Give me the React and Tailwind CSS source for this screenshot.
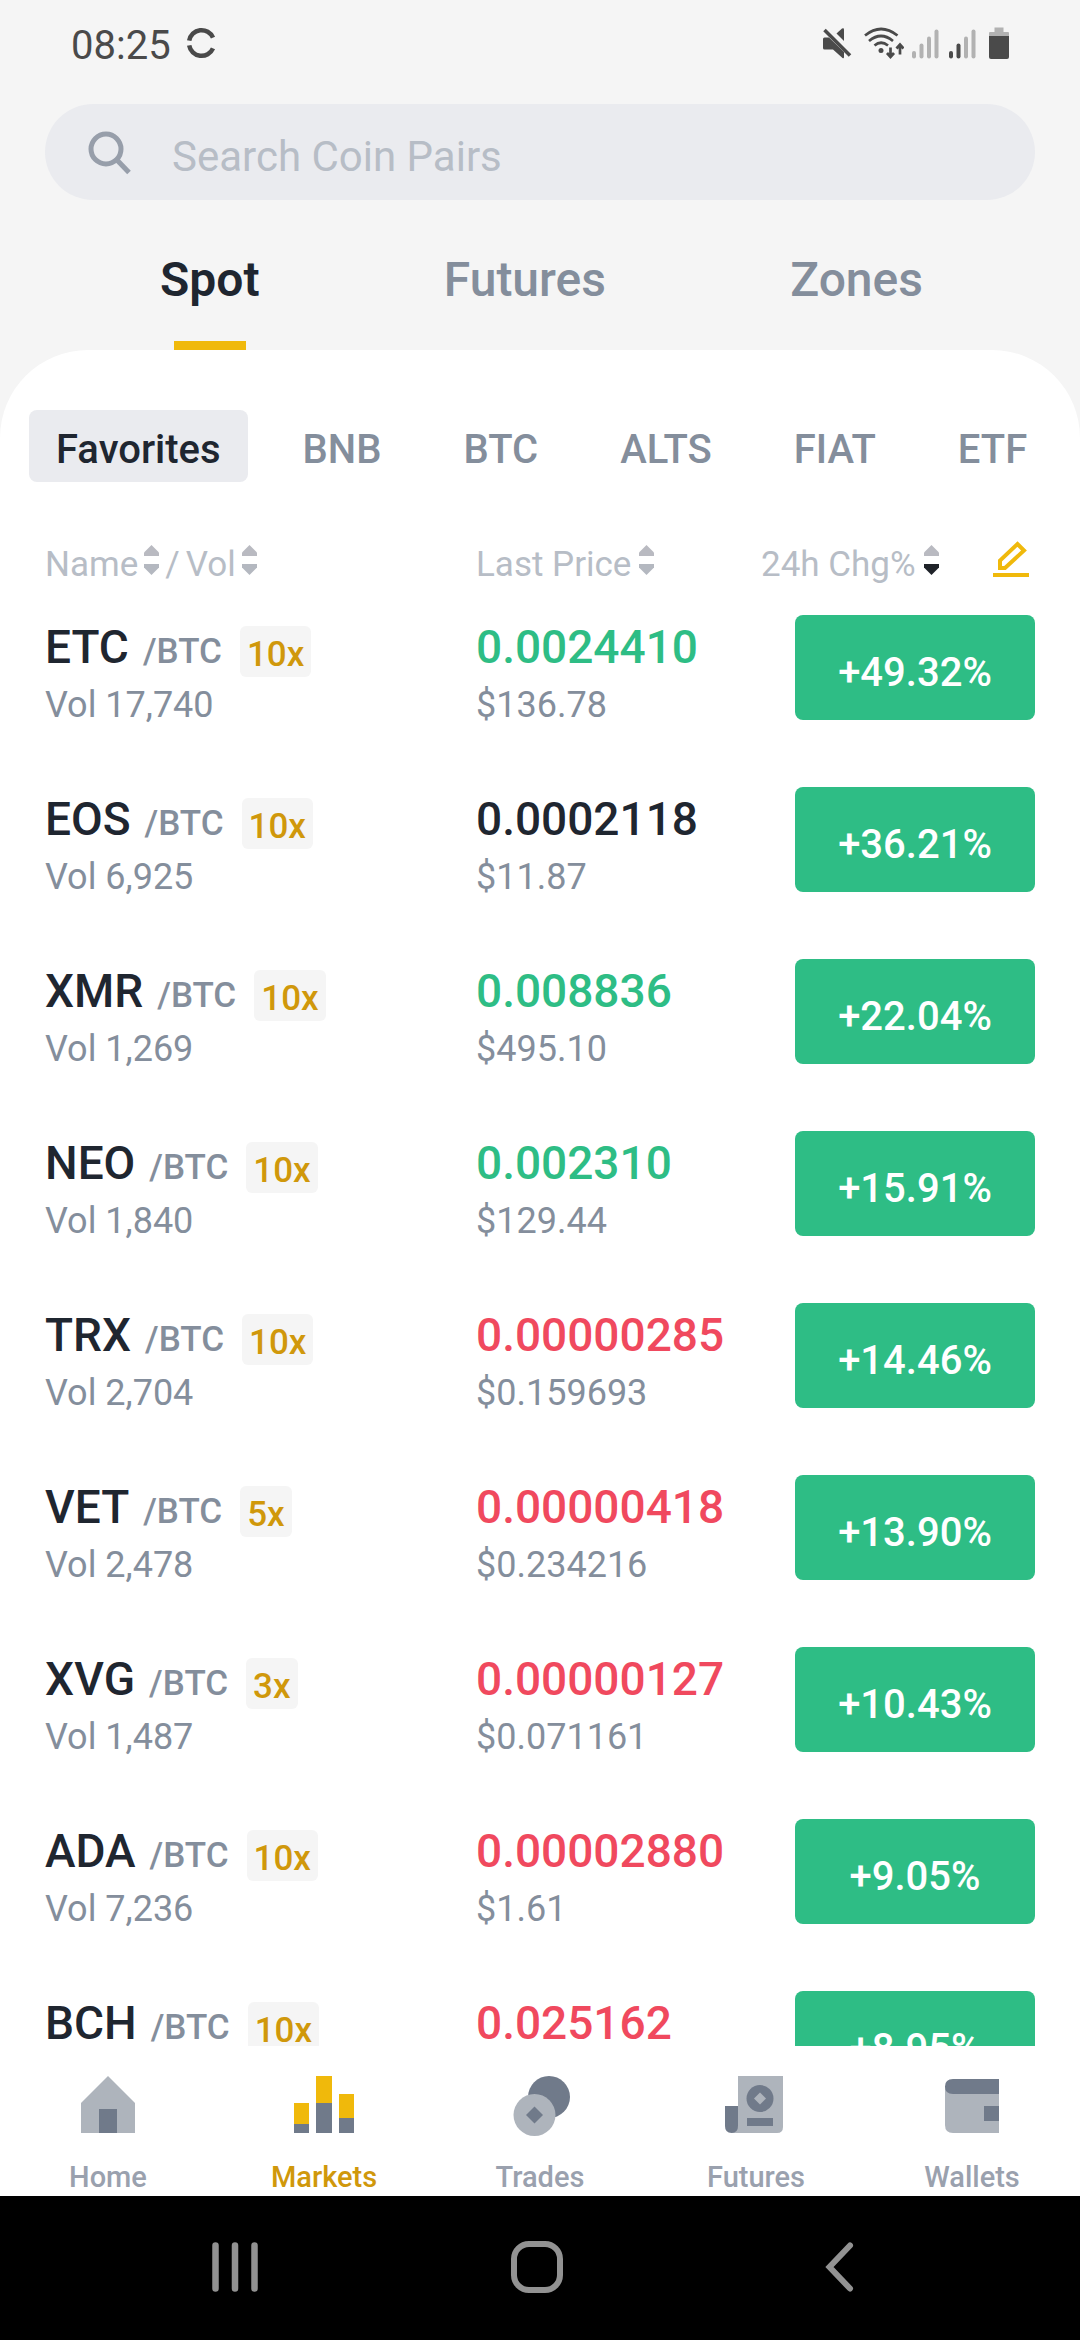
import React, { useState } from "react";

const categories = ["Favorites", "BNB", "BTC", "ALTS", "FIAT", "ETF"];

const pairs = [
  { coin: "ETC", leverage: "10x", vol: "17,740", price: "0.0024410", usd: "$136.78", change: "+49.32%", trend: "up" },
  { coin: "EOS", leverage: "10x", vol: "6,925", price: "0.0002118", usd: "$11.87", change: "+36.21%", trend: "flat" },
  { coin: "XMR", leverage: "10x", vol: "1,269", price: "0.008836", usd: "$495.10", change: "+22.04%", trend: "up" },
  { coin: "NEO", leverage: "10x", vol: "1,840", price: "0.002310", usd: "$129.44", change: "+15.91%", trend: "up" },
  { coin: "TRX", leverage: "10x", vol: "2,704", price: "0.00000285", usd: "$0.159693", change: "+14.46%", trend: "down" },
  { coin: "VET", leverage: "5x", vol: "2,478", price: "0.00000418", usd: "$0.234216", change: "+13.90%", trend: "down" },
  { coin: "XVG", leverage: "3x", vol: "1,487", price: "0.00000127", usd: "$0.071161", change: "+10.43%", trend: "down" },
  { coin: "ADA", leverage: "10x", vol: "7,236", price: "0.00002880", usd: "$1.61", change: "+9.05%", trend: "down" },
  { coin: "BCH", leverage: "10x", price: "0.025162", change: "+8.95%", trend: "down" },
];

const trendColors = {
  up: "text-[#2ebd85]",
  down: "text-[#f0495e]",
  flat: "text-[#1f2630]",
};

const Signal = ({ strength }) => (
  <svg className="w-[29px] h-[38px]" viewBox="0 0 29 38" strokeWidth="4" strokeLinecap="round">
    {[26, 18.5, 11.5, 4.5].map((top, i) => (
      <path key={top} d={`M${2 + i * 7.5} ${top}V29.500`} stroke={i < strength ? "#4a4a4a" : "#b2b2b2"} />
    ))}
  </svg>
);

const StatusBar = () => (
  <div className="flex items-center justify-between h-[92px] px-[71px] shrink-0">
    <div className="flex items-center gap-[15px] text-[40px] text-[#4a4a4a]">
      <span>08:25</span>
      <svg className="w-[32px] h-[38px]" viewBox="0 0 32 38" fill="none" stroke="#4a4a4a" strokeWidth="4.5">
        <path d="M3.200 13.700A12.500 12.500 0 0 1 27 10.700" />
        <path d="M3.200 18.300A12.500 12.500 0 0 0 27 21.300" />
      </svg>
    </div>
    <div className="flex items-center gap-2">
      <svg className="w-[34px] h-[38px]" viewBox="0 0 34 38" fill="#4a4a4a">
        <path d="M3 12Q3 10.500 4.500 10.500H9L24 25V30Q24 32 22.500 31L13 22.500H4.500Q3 22.500 3 21Z" />
        <path d="M16.500 6.500L22 1.500Q24 0.500 24 2.500V14Z" />
        <path d="M4.500 3L30 28.500" stroke="#4a4a4a" strokeWidth="3.500" />
      </svg>
      <svg className="w-[42px] h-[38px]" viewBox="0 0 42 38" fill="none" stroke="#4a4a4a" strokeWidth="2.700">
        <path d="M3 8.500Q19 -4.500 35.500 8.500" />
        <path d="M7 14Q19 4 31 14" />
        <path d="M12.500 18.500Q19 13 26 18.500" />
        <circle cx="19" cy="23.500" r="2.500" fill="#4a4a4a" stroke="none" />
        <path d="M28.500 20.500V29.500M25 26L28.500 30L32 26M38 27.500V18M34.500 21.500L38 17.500L41.500 21.500" />
      </svg>
      <Signal strength={0} />
      <Signal strength={2} />
      <svg className="w-[23px] h-[38px]" viewBox="0 0 23 38">
        <path d="M8.500 0.500H17.500V5H22Q23 5 23 6V9H3V6Q3 5 4 5H8.500Z" fill="#b2b2b2" />
        <path d="M3 9H23V30Q23 32 21 32H5Q3 32 3 30Z" fill="#4a4a4a" />
      </svg>
    </div>
  </div>
);

const Sorter = ({ active }) => (
  <svg className="w-[15px] h-[30px] mt-1 shrink-0" viewBox="0 0 15 30">
    <path d="M7.500 0L15 7.500V11H0V7.500Z" fill="#b9bac1" />
    <path d="M0 19H15V22.500L7.500 30L0 22.500Z" fill={active ? "#1f2329" : "#b4b8c0"} />
  </svg>
);

const icons = {
  Home: (
    <>
      <path d="M32 2L59 29V59H5V29Z" fill="#aeb4bc" />
      <path d="M23 35H41V59H23Z" fill="#707a8a" />
    </>
  ),
  Markets: (
    <>
      <path d="M2 29H17V50H2ZM24 2H40V29H24ZM47 20H62V44H47Z" fill="#f0b90b" />
      <path d="M2 50H17V59H2ZM24 29H40V59H24ZM47 44H62V59H47Z" fill="#707a8a" />
    </>
  ),
  Trades: (
    <>
      <circle cx="41" cy="23" r="21" fill="#707a8a" />
      <circle cx="26.5" cy="41" r="21" fill="#aeb4bc" />
      <path d="M26.500 32.500L35 41L26.500 49.500L18 41Z" fill="#707a8a" />
    </>
  ),
  Futures: (
    <>
      <path d="M14 2H59V53Q59 59 53 59H7L14 52Z" fill="#aeb4bc" />
      <path d="M1 32H14V52Q14 59 7.500 59Q1 59 1 52Z" fill="#707a8a" />
      <circle cx="36" cy="24.5" r="13.500" fill="#707a8a" />
      <path d="M36 18.500L42 24.500L36 30.500L30 24.500Z" fill="#aeb4bc" />
      <path d="M23 44H49V52H23Z" fill="#707a8a" />
    </>
  ),
  Wallets: (
    <>
      <path d="M5 12H59V59H13Q5 59 5 51Z" fill="#aeb4bc" />
      <path d="M13 5H59V20H13Q5 20 5 12.500Q5 5 13 5ZM44 32H59V47H44Z" fill="#707a8a" />
    </>
  ),
};

const App = () => {
  const [market, setMarket] = useState("Spot");
  const [category, setCategory] = useState("Favorites");
  const [page, setPage] = useState("Markets");

  return (
    <div className="flex flex-col h-screen overflow-hidden bg-[#f5f5f5] font-['Roboto',sans-serif]">
      <StatusBar />

      <label className="flex items-center h-24 mx-[45px] mt-3 pl-[43px] rounded-full bg-[#eaebef] shrink-0">
        <svg className="w-[44px] h-[46px] shrink-0" viewBox="0 0 44 46" fill="none" stroke="#979eaa" strokeWidth="5">
          <circle cx="18" cy="20" r="15" />
          <path d="M28 30L41 43.500" />
        </svg>
        <input
          type="text"
          aria-label="Search Coin Pairs"
          placeholder="Search Coin Pairs"
          className="w-full ml-10 pt-2 text-[42px] outline-none placeholder:text-[#b7bdc6]"
        />
      </label>

      <div className="flex justify-between pl-40 pr-[157px] shrink-0">
        {["Spot", "Futures", "Zones"].map((name) => (
          <button
            key={name}
            onClick={() => setMarket(name)}
            className={`flex flex-col items-center pt-[50px] text-[48px] ${
              market === name ? "font-semibold text-[#1f2630]" : "font-medium text-[#848e9c]"
            }`}
          >
            <span className="leading-[60px] mb-[31px]">{name}</span>
            <span className={`w-18 h-[9px] ${market === name ? "bg-[#f0b90b]" : ""}`}></span>
          </button>
        ))}
      </div>

      <main className="flex flex-col flex-1 min-h-0 overflow-hidden bg-white rounded-t-[88px] pt-[60px]">
        <div className="flex gap-7 pl-[29px] shrink-0">
          {categories.map((name) => (
            <button
              key={name}
              onClick={() => setCategory(name)}
              className={`h-18 px-[27px] pt-2 rounded-lg text-[40px] font-medium shrink-0 ${
                category === name ? "bg-[#eaebef] text-[#1f2630]" : "text-[#848e9c]"
              }`}
            >
              {name}
            </button>
          ))}
        </div>

        <div className="px-[45px] mt-[59px]">
          <table className="w-full table-fixed text-left">
            <thead>
              <tr className="h-[74px] align-top text-[35px] leading-[48px] text-[#b7bdc6]">
                <th className="font-normal">
                  <div className="flex gap-1.5">
                    <button className="flex gap-1.5">
                      Name <Sorter />
                    </button>
                    <span>/</span>
                    <button className="flex gap-1.5">
                      Vol <Sorter />
                    </button>
                  </div>
                </th>
                <th className="w-[285px] font-normal">
                  <button className="flex gap-2">
                    Last Price <Sorter />
                  </button>
                </th>
                <th className="w-[274px] font-normal">
                  <div className="flex justify-between pr-1.5">
                    <button className="flex gap-2">
                      24h Chg% <Sorter active />
                    </button>
                    <button aria-label="Edit favorites" className="self-start">
                      <svg className="w-[36px] h-[36px]" viewBox="0 0 36 36" fill="none" stroke="#f0b90b" strokeWidth="4">
                        <path d="M0 34H36" />
                        <path d="M7 27V19.500L24.500 3L31 9.500L12 27Z" />
                      </svg>
                    </button>
                  </div>
                </th>
              </tr>
            </thead>
            <tbody>
              {pairs.map((pair) => (
                <tr key={pair.coin} className="h-43 align-top">
                  <td className="pt-0.5">
                    <div className="flex items-baseline h-[60px] font-medium">
                      <span className="text-[46px] leading-[60px] text-[#1f2630]">{pair.coin}</span>
                      <span className="ml-[14px] text-[35px] leading-none text-[#848e9c]">/BTC</span>
                      <span className="self-end ml-[18px] px-[7px] pt-[7px] rounded-md bg-[#f5f5f5] text-[35px] leading-[44px] text-[#d0980b]">
                        {pair.leverage}
                      </span>
                    </div>
                    {pair.vol && <div className="text-[36px] leading-[56px] text-[#848e9c]">Vol {pair.vol}</div>}
                  </td>
                  <td className="pt-0.5">
                    <div className={`text-[46px] leading-[60px] font-medium ${trendColors[pair.trend]}`}>{pair.price}</div>
                    {pair.usd && <div className="text-[36px] leading-[56px] text-[#848e9c]">{pair.usd}</div>}
                  </td>
                  <td>
                    <div className="w-60 h-[105px] ml-auto pt-2.5 rounded-lg bg-[#2ebd85] text-center text-[40px] leading-[95px] font-medium text-white">
                      {pair.change}
                    </div>
                  </td>
                </tr>
              ))}
            </tbody>
          </table>
        </div>
      </main>

      <nav className="grid grid-cols-5 pt-7 bg-white shrink-0">
        {Object.keys(icons).map((name) => (
          <button
            key={name}
            onClick={() => setPage(name)}
            className={`flex flex-col items-center text-[29px] leading-[38px] font-medium ${
              page === name ? "text-[#d0980b]" : "text-[#9aa1ae]"
            }`}
          >
            <svg className="w-16 h-16 mb-5" viewBox="0 0 64 64">
              {icons[name]}
            </svg>
            {name}
          </button>
        ))}
      </nav>

      <div className="grid grid-cols-3 h-36 pl-[84px] pr-[90px] bg-black shrink-0">
        <button aria-label="Recent apps" className="flex items-center justify-center">
          <svg className="w-[54px] h-[54px]" viewBox="0 0 54 54" stroke="#929292" strokeWidth="6.500" strokeLinecap="round">
            <path d="M7.500 4.500V47.500M27 4.500V47.500M46.500 4.500V47.500" />
          </svg>
        </button>
        <button aria-label="Home screen" className="flex items-center justify-center">
          <svg className="w-[54px] h-[54px]" viewBox="0 0 54 54" fill="none" stroke="#929292" strokeWidth="6">
            <rect x="4" y="3" width="46" height="46" rx="15" />
          </svg>
        </button>
        <button aria-label="Back" className="flex items-center justify-center">
          <svg className="w-[54px] h-[54px]" viewBox="0 0 54 54" fill="none" stroke="#929292" strokeWidth="6" strokeLinecap="round">
            <path d="M38 4.500L17.500 26L38 47.500" />
          </svg>
        </button>
      </div>
    </div>
  );
};

export default App;
